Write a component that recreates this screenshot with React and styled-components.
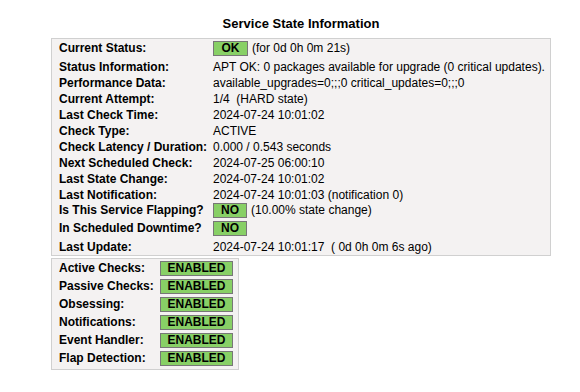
import React from 'react';
import styled, { createGlobalStyle } from 'styled-components';

const GlobalStyle = createGlobalStyle`
    body {
        margin: 0;
        background: #ffffff;
        font-family: "Liberation Sans", Arial, sans-serif;
        font-size: 12px;
        color: #000000;
    }
`;

const Page = styled.div`
    padding-left: 51px;
`;

const Title = styled.div`
    width: 500px;
    margin-top: 16px;
    height: 22px;
    line-height: 16px;
    text-align: center;
    font-size: 13px;
    font-weight: bold;
`;

const InfoBox = styled.div`
    box-sizing: border-box;
    width: ${props => props.width};
    background: #f4f2f2;
    border: 1px solid #d0d0d0;
    padding: 2px 6px 0 7px;
    margin-bottom: 2px;
`;

const Row = styled.div`
    display: grid;
    grid-template-columns: ${props => props.labelWidth} 1fr;
    align-items: start;
    min-height: ${props => (props.badge ? '18px' : '16px')};
    line-height: ${props => (props.badge ? '15px' : '16px')};
`;

const Label = styled.div`
    font-weight: bold;
    white-space: nowrap;
`;

const Value = styled.div`
    display: flex;
    align-items: flex-start;
    white-space: nowrap;
`;

const Badge = styled.span`
    box-sizing: border-box;
    display: inline-block;
    height: 15px;
    width: ${props => props.width};
    line-height: 13px;
    text-align: center;
    font-weight: bold;
    background: #88d066;
    border: 1px solid #777777;
`;

const Note = styled.span`
    margin-left: 4px;
`;

const stateRows = [
    { label: 'Current Status:', badge: 'OK', badgeWidth: '35px', text: '(for 0d 0h 0m 21s)' },
    { label: 'Status Information:', text: 'APT OK: 0 packages available for upgrade (0 critical updates).' },
    { label: 'Performance Data:', text: 'available_upgrades=0;;;0 critical_updates=0;;;0' },
    { label: 'Current Attempt:', text: '1/4\u00a0\u00a0(HARD state)' },
    { label: 'Last Check Time:', text: '2024-07-24 10:01:02' },
    { label: 'Check Type:', text: 'ACTIVE' },
    { label: 'Check Latency / Duration:', text: '0.000\u00a0/\u00a00.543 seconds' },
    { label: 'Next Scheduled Check:', text: '2024-07-25 06:00:10' },
    { label: 'Last State Change:', text: '2024-07-24 10:01:02' },
    { label: 'Last Notification:', text: '2024-07-24 10:01:03 (notification 0)' },
    { label: 'Is This Service Flapping?', badge: 'NO', badgeWidth: '34px', text: '(10.00% state change)' },
    { label: 'In Scheduled Downtime?', badge: 'NO', badgeWidth: '34px' },
    { label: 'Last Update:', text: '2024-07-24 10:01:17\u00a0\u00a0( 0d 0h 0m 6s ago)' },
];

const checkRows = [
    'Active Checks:',
    'Passive Checks:',
    'Obsessing:',
    'Notifications:',
    'Event Handler:',
    'Flap Detection:',
];

const App = () => (
    <Page>
        <GlobalStyle />
        <Title>Service State Information</Title>
        <InfoBox width="500px">
            {stateRows.map(row => (
                <Row key={row.label} labelWidth="154px" badge={!!row.badge}>
                    <Label>{row.label}</Label>
                    <Value>
                        {row.badge && <Badge width={row.badgeWidth}>{row.badge}</Badge>}
                        {row.badge
                            ? row.text && <Note>{row.text}</Note>
                            : row.text}
                    </Value>
                </Row>
            ))}
        </InfoBox>
        <InfoBox width="188px">
            {checkRows.map(label => (
                <Row key={label} labelWidth="101px" badge>
                    <Label>{label}</Label>
                    <Value>
                        <Badge width="73px">ENABLED</Badge>
                    </Value>
                </Row>
            ))}
        </InfoBox>
    </Page>
);

export default App;
